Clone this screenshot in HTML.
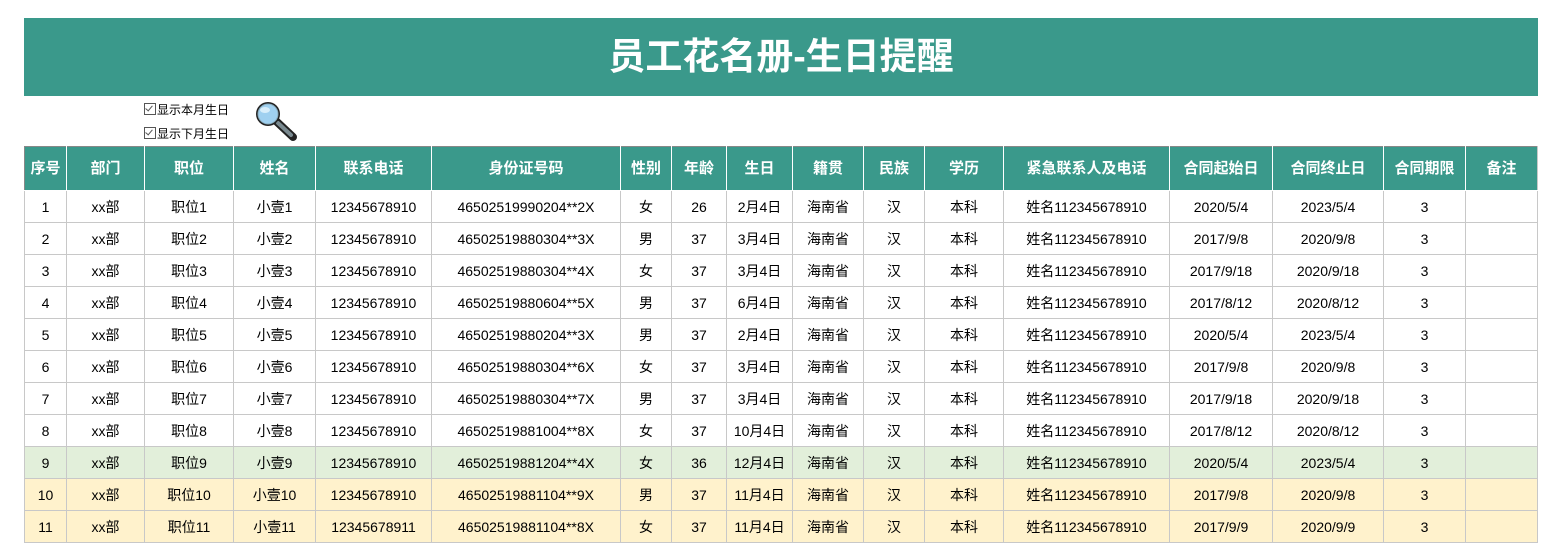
<!DOCTYPE html>
<html><head><meta charset="utf-8"><style>
body{margin:0;width:1564px;height:544px;background:#fff;overflow:hidden;font-family:"Liberation Sans","Noto Sans CJK SC",sans-serif;position:relative}
.title{position:absolute;left:24px;top:18px;width:1514px;height:78px;background:#3a998b;color:#fff;font-weight:bold;font-size:37px;text-align:center;line-height:78px;letter-spacing:0}
.cb{position:absolute;left:144px;font-size:12px;color:#000;line-height:14px}
.cb span{display:inline-block;width:10px;height:10px;border:1px solid #555;vertical-align:-1px;margin-right:1px;position:relative}
.cb span:after{content:"";position:absolute;left:2px;top:0;width:3px;height:6px;border:solid #555;border-width:0 1.5px 1.5px 0;transform:rotate(40deg)}
table{position:absolute;left:24px;top:146px;border-collapse:collapse;table-layout:fixed}
td,th{border:1px solid #c8c8c8;text-align:center;padding:0;font-size:14px;height:31px;line-height:16px;white-space:nowrap;overflow:hidden}
th{background:#3a998b;color:#fff;font-size:15px;font-weight:bold;height:43px;border-color:#fff;border-top:1px solid #888}
th:first-child{border-left:1px solid #888}
th:last-child{border-right:1px solid #c8c8c8}
tr.g td{background:#e2efda}tr.y td{background:#fff2cc}
</style></head><body>
<div class="title">员工花名册-生日提醒</div>
<div class="cb" style="top:103px"><span></span>显示本月生日</div>
<div class="cb" style="top:127px"><span></span>显示下月生日</div>
<svg style="position:absolute;left:252px;top:99px" width="48" height="44" viewBox="0 0 48 44">
<line x1="24" y1="22" x2="41" y2="38" stroke="#222" stroke-width="8" stroke-linecap="round"/>
<line x1="26" y1="24" x2="39" y2="36" stroke="#7a8a90" stroke-width="4" stroke-linecap="round"/>
<circle cx="16" cy="15" r="12" fill="#222"/>
<circle cx="16" cy="15" r="10" fill="#9fd0f0" stroke="#8ab" stroke-width="1"/>
<ellipse cx="13" cy="11" rx="5" ry="3" fill="#d8eefb"/>
</svg>
<table>
<colgroup><col style="width:42px"><col style="width:78px"><col style="width:89px"><col style="width:82px"><col style="width:116px"><col style="width:189px"><col style="width:51px"><col style="width:55px"><col style="width:66px"><col style="width:71px"><col style="width:61px"><col style="width:79px"><col style="width:166px"><col style="width:103px"><col style="width:111px"><col style="width:82px"><col style="width:72px"></colgroup>
<tr><th>序号</th><th>部门</th><th>职位</th><th>姓名</th><th>联系电话</th><th>身份证号码</th><th>性别</th><th>年龄</th><th>生日</th><th>籍贯</th><th>民族</th><th>学历</th><th>紧急联系人及电话</th><th>合同起始日</th><th>合同终止日</th><th>合同期限</th><th>备注</th></tr>
<tr><td>1</td><td>xx部</td><td>职位1</td><td>小壹1</td><td>12345678910</td><td>46502519990204**2X</td><td>女</td><td>26</td><td>2月4日</td><td>海南省</td><td>汉</td><td>本科</td><td>姓名112345678910</td><td>2020/5/4</td><td>2023/5/4</td><td>3</td><td></td></tr>
<tr><td>2</td><td>xx部</td><td>职位2</td><td>小壹2</td><td>12345678910</td><td>46502519880304**3X</td><td>男</td><td>37</td><td>3月4日</td><td>海南省</td><td>汉</td><td>本科</td><td>姓名112345678910</td><td>2017/9/8</td><td>2020/9/8</td><td>3</td><td></td></tr>
<tr><td>3</td><td>xx部</td><td>职位3</td><td>小壹3</td><td>12345678910</td><td>46502519880304**4X</td><td>女</td><td>37</td><td>3月4日</td><td>海南省</td><td>汉</td><td>本科</td><td>姓名112345678910</td><td>2017/9/18</td><td>2020/9/18</td><td>3</td><td></td></tr>
<tr><td>4</td><td>xx部</td><td>职位4</td><td>小壹4</td><td>12345678910</td><td>46502519880604**5X</td><td>男</td><td>37</td><td>6月4日</td><td>海南省</td><td>汉</td><td>本科</td><td>姓名112345678910</td><td>2017/8/12</td><td>2020/8/12</td><td>3</td><td></td></tr>
<tr><td>5</td><td>xx部</td><td>职位5</td><td>小壹5</td><td>12345678910</td><td>46502519880204**3X</td><td>男</td><td>37</td><td>2月4日</td><td>海南省</td><td>汉</td><td>本科</td><td>姓名112345678910</td><td>2020/5/4</td><td>2023/5/4</td><td>3</td><td></td></tr>
<tr><td>6</td><td>xx部</td><td>职位6</td><td>小壹6</td><td>12345678910</td><td>46502519880304**6X</td><td>女</td><td>37</td><td>3月4日</td><td>海南省</td><td>汉</td><td>本科</td><td>姓名112345678910</td><td>2017/9/8</td><td>2020/9/8</td><td>3</td><td></td></tr>
<tr><td>7</td><td>xx部</td><td>职位7</td><td>小壹7</td><td>12345678910</td><td>46502519880304**7X</td><td>男</td><td>37</td><td>3月4日</td><td>海南省</td><td>汉</td><td>本科</td><td>姓名112345678910</td><td>2017/9/18</td><td>2020/9/18</td><td>3</td><td></td></tr>
<tr><td>8</td><td>xx部</td><td>职位8</td><td>小壹8</td><td>12345678910</td><td>46502519881004**8X</td><td>女</td><td>37</td><td>10月4日</td><td>海南省</td><td>汉</td><td>本科</td><td>姓名112345678910</td><td>2017/8/12</td><td>2020/8/12</td><td>3</td><td></td></tr>
<tr class="g"><td>9</td><td>xx部</td><td>职位9</td><td>小壹9</td><td>12345678910</td><td>46502519881204**4X</td><td>女</td><td>36</td><td>12月4日</td><td>海南省</td><td>汉</td><td>本科</td><td>姓名112345678910</td><td>2020/5/4</td><td>2023/5/4</td><td>3</td><td></td></tr>
<tr class="y"><td>10</td><td>xx部</td><td>职位10</td><td>小壹10</td><td>12345678910</td><td>46502519881104**9X</td><td>男</td><td>37</td><td>11月4日</td><td>海南省</td><td>汉</td><td>本科</td><td>姓名112345678910</td><td>2017/9/8</td><td>2020/9/8</td><td>3</td><td></td></tr>
<tr class="y"><td>11</td><td>xx部</td><td>职位11</td><td>小壹11</td><td>12345678911</td><td>46502519881104**8X</td><td>女</td><td>37</td><td>11月4日</td><td>海南省</td><td>汉</td><td>本科</td><td>姓名112345678910</td><td>2017/9/9</td><td>2020/9/9</td><td>3</td><td></td></tr>
</table>
</body></html>
